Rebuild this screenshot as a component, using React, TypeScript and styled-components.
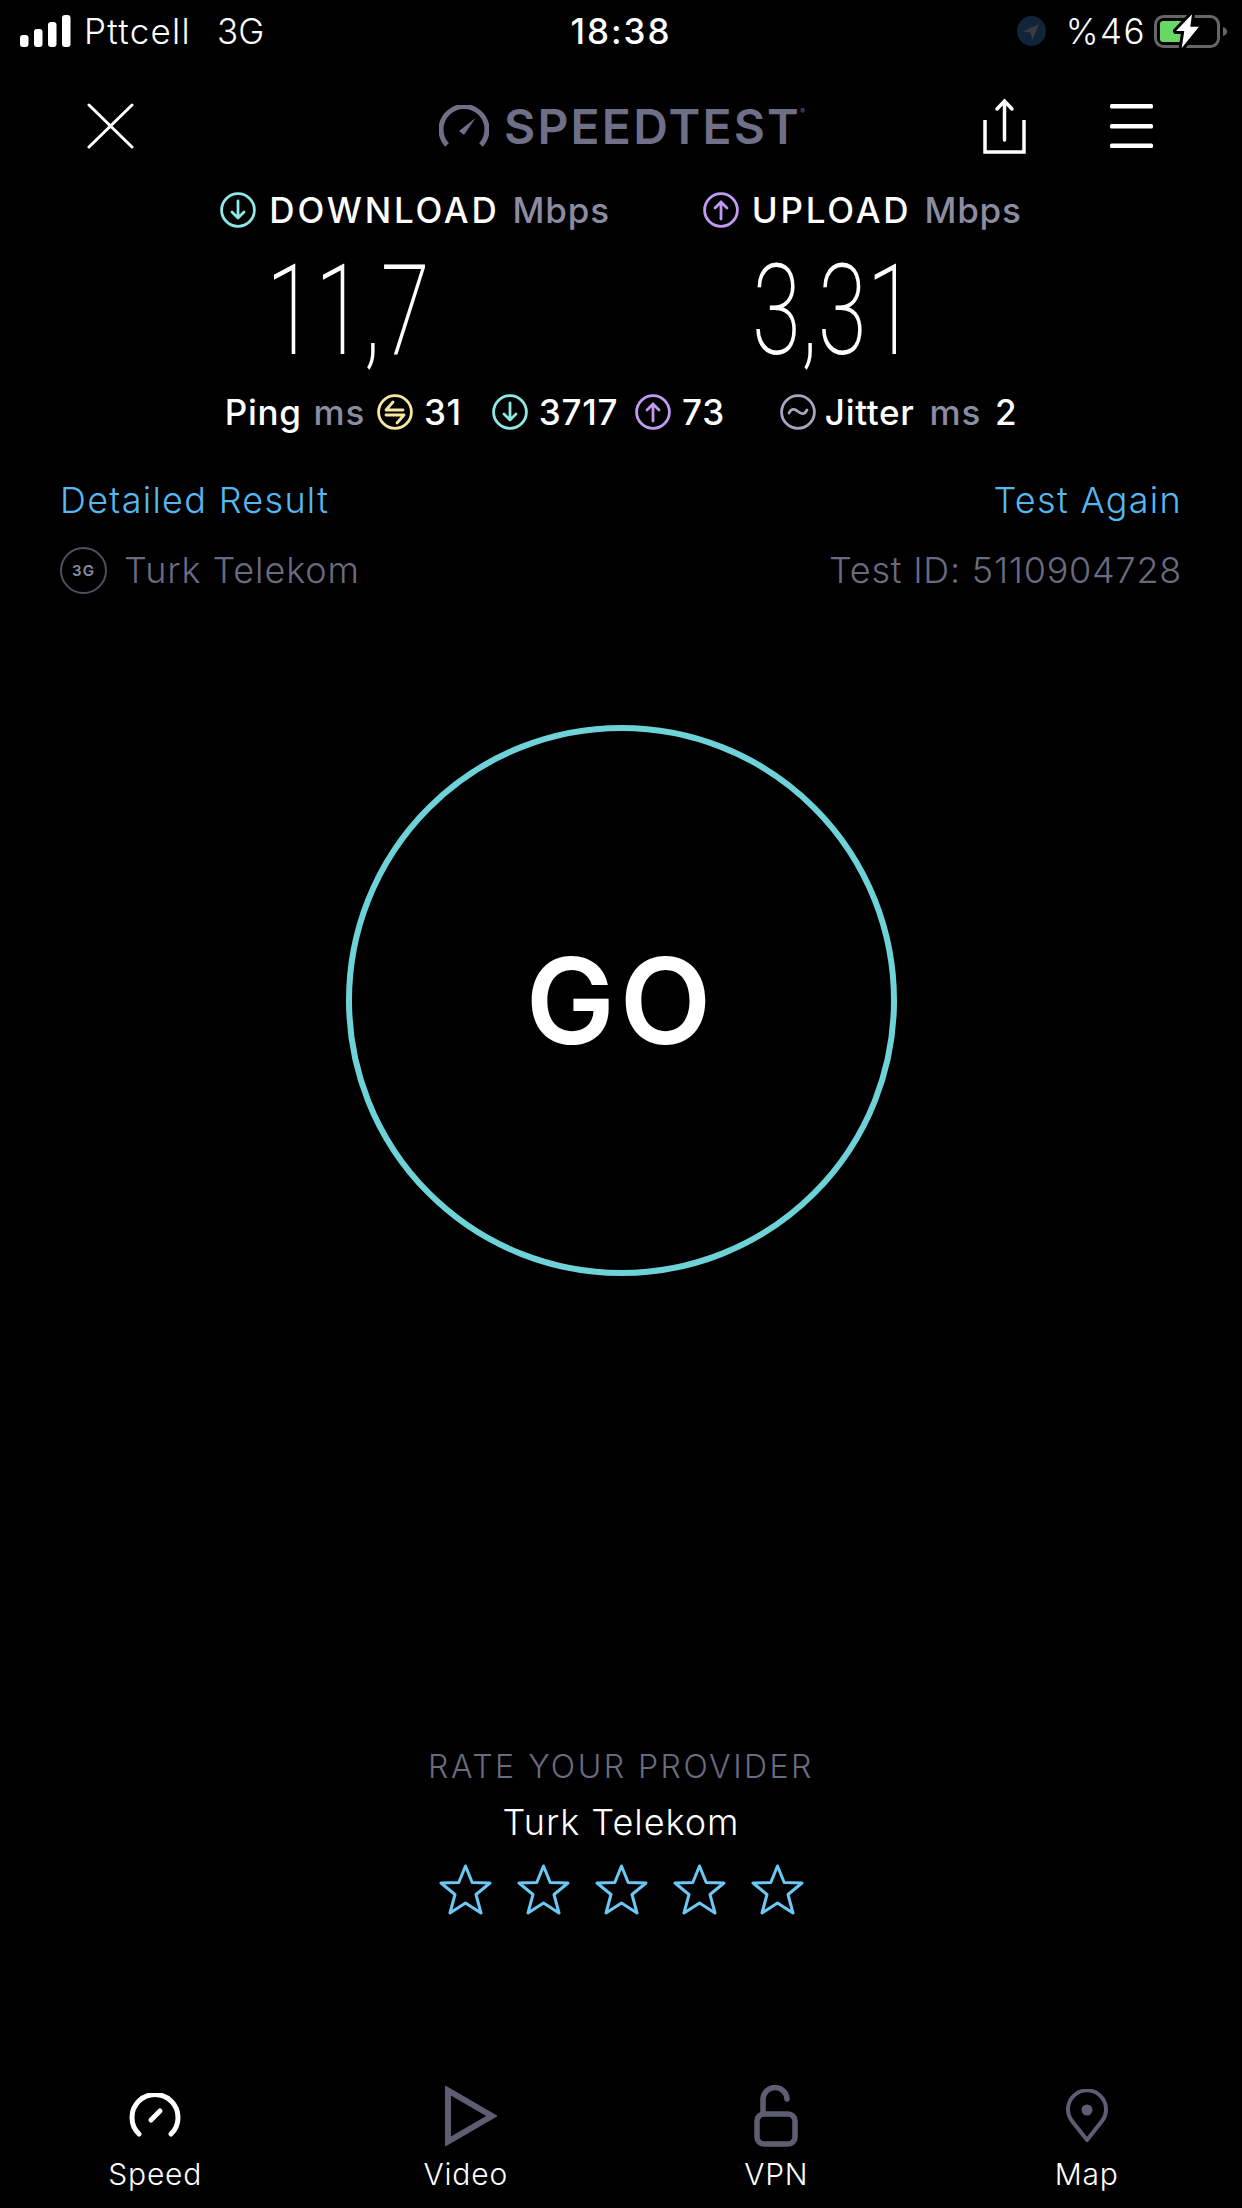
import React from "react";
import styled, { createGlobalStyle } from "styled-components";

const Global = createGlobalStyle`
  html, body { margin: 0; padding: 0; background: #000; }
  * { box-sizing: border-box; }
`;

const Screen = styled.div`
  width: 1242px;
  height: 2208px;
  background: #000;
  color: #fff;
  font-family: Inter, "Liberation Sans", sans-serif;
  display: flex;
  flex-direction: column;
  overflow: hidden;
`;

const StatusBar = styled.div`
  height: 62px;
  padding: 0 14px;
  display: grid;
  grid-template-columns: 1fr auto 1fr;
  align-items: center;
`;
const StatusSide = styled.div<{ $end?: boolean }>`
  display: flex;
  align-items: center;
  justify-content: ${(p) => (p.$end ? "flex-end" : "flex-start")};
`;
const SignalSlot = styled.span`
  margin-left: 6px;
  display: flex;
`;
const Carrier = styled.span`
  margin-left: 13px;
  font-weight: 300;
  font-size: 35px;
  letter-spacing: 1.300px;
`;
const Network = styled.span`
  margin-left: 26px;
  font-weight: 300;
  font-size: 35px;
`;
const Time = styled.span`
  font-weight: 500;
  font-size: 35px;
  letter-spacing: 2px;
`;
const Percent = styled.span`
  margin: 0 8px 0 20px;
  font-weight: 300;
  font-size: 35px;
  letter-spacing: 1.500px;
`;

const NavBar = styled.div`
  height: 88px;
  margin-top: 20px;
  padding: 0 89px 0 87px;
  display: grid;
  grid-template-columns: 1fr auto 1fr;
  align-items: center;
`;
const NavRight = styled.div`
  display: flex;
  justify-content: flex-end;
  align-items: center;
  gap: 84px;
`;
const Logo = styled.div`
  display: flex;
  align-items: center;
  gap: 15px;
`;
const LogoText = styled.span`
  font-size: 48px;
  font-weight: 600;
  color: #6f6f88;
  letter-spacing: 2.200px;
  position: relative;
`;
const Registered = styled.sup`
  font-size: 7px;
  position: absolute;
  top: 10px;
  right: -4px;
  font-weight: 400;
  letter-spacing: 0;
`;

const Stats = styled.div`
  display: flex;
  justify-content: center;
  gap: 93px;
  margin-top: 18px;
`;
const StatColumn = styled.div`
  display: flex;
  flex-direction: column;
`;
const StatHeader = styled.div`
  display: flex;
  align-items: center;
  height: 44px;
`;
const StatTitle = styled.span`
  margin-left: 13px;
  font-size: 35px;
  font-weight: 500;
  letter-spacing: 2.800px;
`;
const StatUnit = styled.span`
  margin-left: 13px;
  font-size: 35px;
  font-weight: 500;
  color: #8b8ca2;
  letter-spacing: 0.800px;
`;
const BigValue = styled.div<{ $indent: number }>`
  margin: 14px 0 0 ${(p) => p.$indent}px;
  height: 130px;
  font-family: Roboto, sans-serif;
  font-weight: 200;
  font-size: 127px;
  line-height: 130px;
  transform: scaleX(0.7);
  transform-origin: left center;
  white-space: nowrap;
`;

const PingRow = styled.div`
  margin-top: 14px;
  height: 44px;
  display: flex;
  justify-content: center;
  align-items: center;
  font-size: 35px;
  font-weight: 500;
  letter-spacing: 0.700px;
`;
const PingLabel = styled.span<{ $gap?: number }>`
  margin-left: ${(p) => p.$gap ?? 0}px;
`;
const PingUnit = styled.span<{ $gap?: number }>`
  margin-left: ${(p) => p.$gap ?? 12}px;
  color: #8b8ca2;
  font-weight: 500;
`;
const RingSlot = styled.span<{ $gap?: number }>`
  margin-left: ${(p) => p.$gap ?? 0}px;
  display: flex;
`;

const InfoRow = styled.div<{ $top: number }>`
  margin-top: ${(p) => p.$top}px;
  padding: 0 60px;
  height: 44px;
  display: flex;
  justify-content: space-between;
  align-items: center;
  font-size: 36px;
  font-weight: 300;
`;
const LinkText = styled.span`
  color: #55b8f0;
  letter-spacing: 1.300px;
`;
const Provider = styled.div`
  display: flex;
  align-items: center;
  color: #6a6b80;
  letter-spacing: 0.900px;
`;
const NetBadge = styled.span`
  width: 47px;
  height: 47px;
  border: 2px solid #4f5061;
  border-radius: 50%;
  margin-right: 17px;
  display: flex;
  align-items: center;
  justify-content: center;
  font-size: 15px;
  font-weight: 600;
  color: #8b8ca2;
  letter-spacing: 1px;
`;
const TestId = styled.span`
  color: #6a6b80;
  letter-spacing: 0.750px;
`;

const GoButton = styled.div`
  align-self: center;
  margin-top: 133px;
  width: 551px;
  height: 551px;
  border: 6px solid #6dd3d8;
  border-radius: 50%;
  display: flex;
  align-items: center;
  justify-content: center;
  font-size: 119px;
  font-weight: 600;
  letter-spacing: 5px;
`;

const Rating = styled.div`
  margin-top: 469px;
  display: flex;
  flex-direction: column;
  align-items: center;
`;
const RatingTitle = styled.div`
  font-size: 32px;
  font-weight: 300;
  color: #6a6b80;
  height: 44px;
  line-height: 44px;
  letter-spacing: 2.500px;
`;
const RatingName = styled.div`
  margin-top: 11px;
  font-size: 36px;
  font-weight: 300;
  height: 44px;
  line-height: 44px;
  letter-spacing: 1px;
`;
const Stars = styled.div`
  margin-top: 20px;
  display: flex;
  gap: 25px;
`;

const TabBar = styled.div`
  margin-top: auto;
  height: 126px;
  display: grid;
  grid-template-columns: repeat(4, 1fr);
`;
const Tab = styled.div`
  display: flex;
  flex-direction: column;
  align-items: center;
`;
const TabIcon = styled.div<{ $shift?: number }>`
  height: 68px;
  padding-left: ${(p) => p.$shift ?? 0}px;
  display: flex;
  align-items: center;
  justify-content: center;
`;
const TabLabel = styled.span`
  margin-top: 6px;
  font-size: 30px;
  font-weight: 300;
  letter-spacing: 0.800px;
`;

const Ring: React.FC<{ color: string; kind: "down" | "up" | "ping" | "jitter" }> = ({ color, kind }) => (
  <svg width="36" height="36" viewBox="0 0 36 36" fill="none" stroke={color} strokeWidth="2.8" strokeLinecap="round" strokeLinejoin="round">
    <circle cx="18" cy="18" r="16.4" />
    {kind === "down" && <path d="M18 9v17M12 20l6 6 6-6" />}
    {kind === "up" && <path d="M18 27V10M12 16l6-6 6 6" />}
    {kind === "ping" && <path d="M26 16H9l7-8M9 21h18l-7 8" />}
    {kind === "jitter" && <path d="M9 19c2-4 5-5 9-1.500s7 2.500 9-1.500" />}
  </svg>
);

const Star = () => (
  <svg width="53" height="52" viewBox="0 0 53 52" fill="none" stroke="#6cc8f5" strokeWidth="3" strokeLinejoin="round">
    <path d="M26.500 2l6.700 16.500 17.800.5-14 11.500 5 18.500-15.500-10-15.500 10 5-18.500L2 19l17.800-.5z" />
  </svg>
);

export default function App() {
  return (
    <Screen>
      <Global />
      <StatusBar>
        <StatusSide>
          <SignalSlot>
            <svg width="51" height="32" viewBox="0 0 51 32" fill="#fff">
              <rect x="0" y="20" width="8.500" height="12" rx="3" />
              <rect x="14" y="14" width="8.500" height="18" rx="3" />
              <rect x="28" y="7" width="8.500" height="25" rx="3" />
              <rect x="42" y="0" width="8.500" height="32" rx="3" />
            </svg>
          </SignalSlot>
          <Carrier>Pttcell</Carrier>
          <Network>3G</Network>
        </StatusSide>
        <Time>18:38</Time>
        <StatusSide $end>
          <svg width="29" height="30" viewBox="0 0 29 30">
            <ellipse cx="14.500" cy="15" rx="14.500" ry="15" fill="#10253a" />
            <path d="M22 8L6 15.500l7.500 1 2 7.500z" fill="#3c3c3e" />
          </svg>
          <Percent>%46</Percent>
          <svg width="74" height="37" viewBox="0 0 74 37">
            <rect x="1.500" y="3.500" width="63" height="30" rx="8" fill="none" stroke="#666" strokeWidth="3" />
            <rect x="6" y="8" width="30" height="21" rx="3" fill="#69d765" />
            <path d="M69 14c3 1 4 2.500 4 4.500s-1 3.500-4 4.500z" fill="#666" />
            <path d="M38 1.300L22 18h8.300l-2.600 17L45 13.700h-8.700z" fill="#fff" stroke="#000" strokeWidth="6" paintOrder="stroke" strokeLinejoin="round" />
          </svg>
        </StatusSide>
      </StatusBar>

      <NavBar>
        <svg width="47" height="46" viewBox="0 0 47 46" fill="none" stroke="#fff" strokeWidth="3" strokeLinecap="round">
          <path d="M2 2l43 42M45 2L2 44" />
        </svg>
        <Logo>
          <svg width="50" height="42" viewBox="0 0 50 42" fill="none" stroke="#6f6f88" strokeWidth="5">
            <path d="M8 40A23 23 0 1 1 42 40" />
            <path d="M20 26L36.500 13 25 30z" fill="#6f6f88" stroke="none" />
          </svg>
          <LogoText>
            SPEEDTEST
            <Registered>®</Registered>
          </LogoText>
        </Logo>
        <NavRight>
          <svg width="43" height="56" viewBox="0 0 43 56" fill="none" stroke="#fff" strokeWidth="3.500" strokeLinecap="round">
            <path d="M21.500 42V3M14 11l7.500-8 7.500 8" />
            <path d="M2 22v32h39V22" strokeLinecap="butt" />
          </svg>
          <svg width="43" height="44" viewBox="0 0 43 44" fill="#fff">
            <rect y="0" width="43" height="4.500" rx="1.500" />
            <rect y="20" width="43" height="4.500" rx="1.500" />
            <rect y="39.500" width="43" height="4.500" rx="1.500" />
          </svg>
        </NavRight>
      </NavBar>

      <Stats>
        <StatColumn>
          <StatHeader>
            <Ring color="#8fe8e6" kind="down" />
            <StatTitle>DOWNLOAD</StatTitle>
            <StatUnit>Mbps</StatUnit>
          </StatHeader>
          <BigValue $indent={46}>11,7</BigValue>
        </StatColumn>
        <StatColumn>
          <StatHeader>
            <Ring color="#c29af0" kind="up" />
            <StatTitle>UPLOAD</StatTitle>
            <StatUnit>Mbps</StatUnit>
          </StatHeader>
          <BigValue $indent={49}>3,31</BigValue>
        </StatColumn>
      </Stats>

      <PingRow>
        <PingLabel>Ping</PingLabel>
        <PingUnit>ms</PingUnit>
        <RingSlot $gap={12}>
          <Ring color="#f5e6a0" kind="ping" />
        </RingSlot>
        <PingLabel $gap={11}>31</PingLabel>
        <RingSlot $gap={30}>
          <Ring color="#8fe8e6" kind="down" />
        </RingSlot>
        <PingLabel $gap={11}>3717</PingLabel>
        <RingSlot $gap={17}>
          <Ring color="#c29af0" kind="up" />
        </RingSlot>
        <PingLabel $gap={11}>73</PingLabel>
        <RingSlot $gap={55}>
          <Ring color="#a5a6bd" kind="jitter" />
        </RingSlot>
        <PingLabel $gap={9}>Jitter</PingLabel>
        <PingUnit $gap={15}>ms</PingUnit>
        <PingLabel $gap={14}>2</PingLabel>
      </PingRow>

      <InfoRow $top={44}>
        <LinkText>Detailed Result</LinkText>
        <LinkText>Test Again</LinkText>
      </InfoRow>
      <InfoRow $top={26}>
        <Provider>
          <NetBadge>3G</NetBadge>
          Turk Telekom
        </Provider>
        <TestId>Test ID: 5110904728</TestId>
      </InfoRow>

      <GoButton>GO</GoButton>

      <Rating>
        <RatingTitle>RATE YOUR PROVIDER</RatingTitle>
        <RatingName>Turk Telekom</RatingName>
        <Stars>
          <Star />
          <Star />
          <Star />
          <Star />
          <Star />
        </Stars>
      </Rating>

      <TabBar>
        <Tab>
          <TabIcon>
            <svg width="52" height="46" viewBox="0 0 52 46" fill="none" stroke="#fff" strokeWidth="5" strokeLinecap="round">
              <path d="M10 41A23 23 0 1 1 42 41" />
              <path d="M22 27l9-9" />
            </svg>
          </TabIcon>
          <TabLabel>Speed</TabLabel>
        </Tab>
        <Tab>
          <TabIcon $shift={10}>
            <svg width="52" height="62" viewBox="0 0 52 62" fill="none" stroke="#5d5e72" strokeWidth="6">
              <path d="M3 5.500v51L47 31z" />
            </svg>
          </TabIcon>
          <TabLabel>Video</TabLabel>
        </Tab>
        <Tab>
          <TabIcon>
            <svg width="44" height="62" viewBox="0 0 44 62" fill="none" stroke="#5d5e72" strokeWidth="5.500" strokeLinecap="round">
              <rect x="3" y="29" width="38" height="30" rx="7" />
              <path d="M9 28V15a12 12 0 0 1 24-1" />
            </svg>
          </TabIcon>
          <TabLabel>VPN</TabLabel>
        </Tab>
        <Tab>
          <TabIcon>
            <svg width="42" height="54" viewBox="0 0 42 54" fill="none" stroke="#5d5e72" strokeWidth="4">
              <path d="M21 51L6 32A19 19 0 1 1 36 32z" strokeLinejoin="round" />
              <circle cx="21" cy="21" r="5.500" fill="#5d5e72" stroke="none" />
            </svg>
          </TabIcon>
          <TabLabel>Map</TabLabel>
        </Tab>
      </TabBar>
    </Screen>
  );
}
